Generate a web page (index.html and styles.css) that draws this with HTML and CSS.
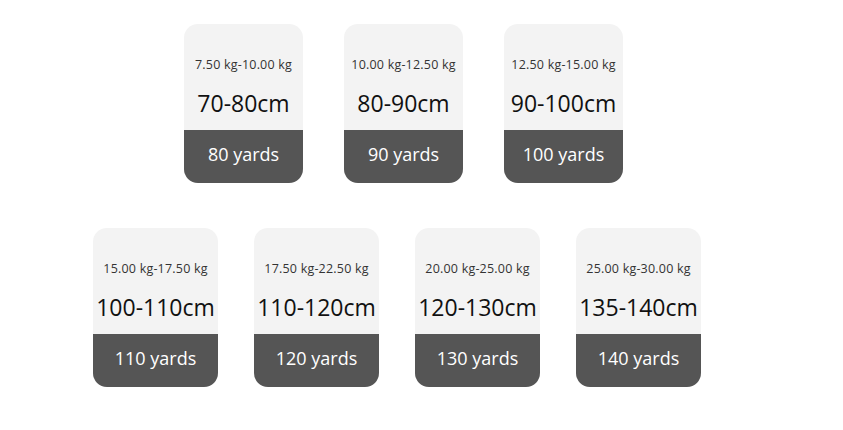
FILE: index.html
```html
<!DOCTYPE html>
<html>
<head>
<meta charset="utf-8">
<link rel="stylesheet" href="styles.css">
</head>
<body>
<div class="page">
  <div class="row row-top">
    <div class="card"><div class="info"><div class="kg">7.50 kg-10.00 kg</div><div class="cm">70-80cm</div></div><div class="yards">80 yards</div></div>
    <div class="card"><div class="info"><div class="kg">10.00 kg-12.50 kg</div><div class="cm">80-90cm</div></div><div class="yards">90 yards</div></div>
    <div class="card"><div class="info"><div class="kg">12.50 kg-15.00 kg</div><div class="cm">90-100cm</div></div><div class="yards">100 yards</div></div>
  </div>
  <div class="row row-bottom">
    <div class="card wide"><div class="info"><div class="kg">15.00 kg-17.50 kg</div><div class="cm">100-110cm</div></div><div class="yards">110 yards</div></div>
    <div class="card wide"><div class="info"><div class="kg">17.50 kg-22.50 kg</div><div class="cm">110-120cm</div></div><div class="yards">120 yards</div></div>
    <div class="card wide"><div class="info"><div class="kg">20.00 kg-25.00 kg</div><div class="cm">120-130cm</div></div><div class="yards">130 yards</div></div>
    <div class="card wide"><div class="info"><div class="kg">25.00 kg-30.00 kg</div><div class="cm">135-140cm</div></div><div class="yards">140 yards</div></div>
  </div>
</div>
</body>
</html>
```
FILE: styles.css
```css
html, body {
  margin: 0;
  padding: 0;
  background: #ffffff;
}
body {
  font-family: "Open Sans", "Noto Sans", sans-serif;
  width: 843px;
  height: 430px;
  overflow: hidden;
}
.page {
  display: flex;
  flex-direction: column;
  padding-top: 24px;
  gap: 45px;
}
.row {
  display: flex;
}
.row-top {
  padding-left: 184px;
  gap: 41px;
}
.row-bottom {
  padding-left: 93px;
  gap: 36px;
}
.card {
  width: 119px;
  height: 159px;
  border-radius: 14px;
  overflow: hidden;
  display: flex;
  flex-direction: column;
  background: #f3f3f3;
}
.card.wide {
  width: 125px;
}
.info {
  height: 106px;
  display: flex;
  flex-direction: column;
  align-items: center;
  padding-top: 32px;
  box-sizing: border-box;
}
.kg {
  font-size: 12.5px;
  letter-spacing: 0.2px;
  line-height: 18px;
  color: #333;
  white-space: nowrap;
}
.cm {
  margin-top: 15px;
  font-size: 23px;
  line-height: 28px;
  color: #111;
  white-space: nowrap;
}
.yards {
  flex: 1;
  background: #555555;
  color: #ffffff;
  font-size: 18px;
  display: flex;
  align-items: center;
  justify-content: center;
  padding-bottom: 6px;
}
```
